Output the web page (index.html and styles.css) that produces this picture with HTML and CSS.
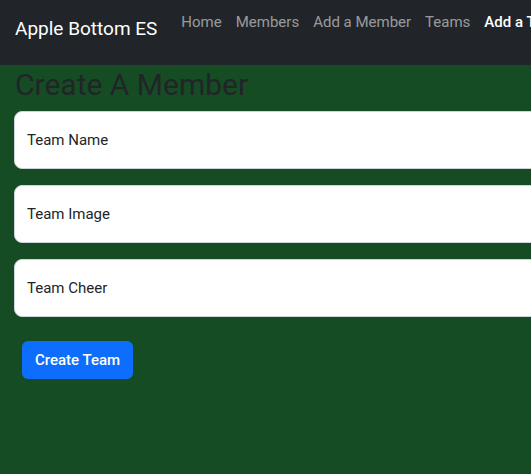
FILE: index.html
```html
<!DOCTYPE html>
<html lang="en">
<head>
<meta charset="utf-8">
<title>Create A Member</title>
<link rel="stylesheet" href="styles.css">
</head>
<body>
<div class="page">
  <nav class="navbar">
    <a class="brand" href="#">Apple Bottom ES</a>
    <ul class="nav-links">
      <li><a href="#">Home</a></li>
      <li><a href="#">Members</a></li>
      <li><a href="#">Add a Member</a></li>
      <li><a href="#">Teams</a></li>
      <li><a class="active" href="#">Add a Team</a></li>
    </ul>
  </nav>
  <main class="content">
    <h1 class="title">Create A Member</h1>
    <form class="form">
      <div class="field"><span class="label">Team Name</span></div>
      <div class="field"><span class="label">Team Image</span></div>
      <div class="field"><span class="label">Team Cheer</span></div>
      <button type="button" class="btn">Create Team</button>
    </form>
  </main>
</div>
</body>
</html>
```
FILE: styles.css
```css
html, body {
  margin: 0;
  padding: 0;
  background: #164c24;
  overflow: hidden;
}
body {
  font-family: Roboto, "Liberation Sans", sans-serif;
  color: #212529;
  height: 474px;
}
.page {
  width: 800px;
}
.navbar {
  background: #212529;
  height: 65px;
  display: flex;
  align-items: flex-start;
  padding-left: 15px;
  box-sizing: border-box;
}
.brand {
  color: #fff;
  text-decoration: none;
  font-size: 19px;
  font-weight: 400;
  line-height: 30px;
  margin-top: 14px;
  margin-right: 17px;
}
.nav-links {
  list-style: none;
  display: flex;
  margin: 0;
  padding: 0;
  margin-top: 7px;
}
.nav-links a {
  display: block;
  padding: 0 7px;
  color: rgba(255,255,255,0.55);
  text-decoration: none;
  font-size: 15px;
  font-weight: 400;
  line-height: 30px;
}
.nav-links a.active {
  color: #fff;
  font-weight: 500;
}
.content {
  padding: 0 14px;
}
.title {
  margin: 0;
  padding-left: 1px;
  font-size: 30px;
  font-weight: 400;
  line-height: 36px;
  margin-top: 2px;
  margin-bottom: 8px;
}
.form {
  display: flex;
  flex-direction: column;
  align-items: flex-start;
}
.field {
  width: 760px;
  height: 58px;
  box-sizing: border-box;
  background: #fff;
  border: 1px solid #ced4da;
  border-radius: 8px;
  padding: 16px 12px;
  margin-bottom: 16px;
}
.label {
  font-size: 15px;
  line-height: 24px;
  display: block;
}
.btn {
  margin: 8px 0 0 8px;
  background: #0d6efd;
  color: #fff;
  border: none;
  border-radius: 6px;
  font-family: inherit;
  font-size: 15px;
  font-weight: 500;
  line-height: 24px;
  padding: 7px 13px;
}
```
